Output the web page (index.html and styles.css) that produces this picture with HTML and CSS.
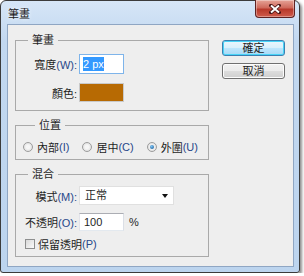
FILE: index.html
```html
<!DOCTYPE html>
<html lang="zh-Hant">
<head>
    <meta charset="UTF-8">
    <title>筆畫</title>
    <link rel="stylesheet" href="styles.css">
</head>
<body>

    <div class="window">
        <div class="titlebar">
            <span class="title">筆畫</span>
            <button class="close-btn">
                <svg width="12" height="10" viewBox="0 0 12 10">
                    <path d="M2 1.5 L10 8.5 M10 1.5 L2 8.5" stroke="#4a1515" stroke-width="3.6" stroke-linecap="square"/>
                    <path d="M2 1.5 L10 8.5 M10 1.5 L2 8.5" stroke="#fff" stroke-width="2"/>
                </svg>
            </button>
        </div>

        <div class="client">
            <div class="groups">
                <fieldset class="group group-stroke">
                    <legend>筆畫</legend>
                    <div class="field-row">
                        <label>寬度<span class="key">(W):</span></label>
                        <div class="text-box focused"><span class="selected">2 px</span></div>
                    </div>
                    <div class="field-row">
                        <label>顏色:</label>
                        <div class="color-box"></div>
                    </div>
                </fieldset>

                <fieldset class="group group-location">
                    <legend>位置</legend>
                    <div class="radio-row">
                        <label class="option"><span class="radio"></span>內部<span class="key">(I)</span></label>
                        <label class="option"><span class="radio"></span>居中<span class="key">(C)</span></label>
                        <label class="option"><span class="radio checked"></span>外圍<span class="key">(U)</span></label>
                    </div>
                </fieldset>

                <fieldset class="group group-blend">
                    <legend>混合</legend>
                    <div class="field-row">
                        <label>模式<span class="key">(M):</span></label>
                        <div class="select-box">正常<span class="arrow"></span></div>
                    </div>
                    <div class="field-row opacity-row">
                        <label>不透明<span class="key">(O):</span></label>
                        <div class="text-box">100</div>
                        <span class="unit">%</span>
                    </div>
                    <label class="check-row"><span class="checkbox"></span>保留透明<span class="key">(P)</span></label>
                </fieldset>
            </div>

            <div class="buttons">
                <button class="dlg-btn default-btn">確定</button>
                <button class="dlg-btn">取消</button>
            </div>
        </div>
    </div>

</body>
</html>
```

FILE: styles.css
```css
body {
    margin: 0;
    background: #ffffff;
    font-family: "Liberation Sans", "Noto Sans CJK TC", sans-serif;
    font-size: 11px;
    color: #1e1e1e;
}
.window {
    width: 298px;
    height: 271px;
    border: 1px solid #3b3b3b;
    border-radius: 6px 6px 3px 3px;
    background: linear-gradient(to bottom, #d6e6f7, #c2d8f0 40px, #bcd4ee);
    box-shadow: 2px 2px 3px rgba(0, 0, 0, 0.45);
    display: flex;
    flex-direction: column;
}
.titlebar {
    height: 23px;
    display: flex;
    justify-content: space-between;
    align-items: flex-start;
    padding-left: 7px;
}
.title {
    margin-top: 5px;
    font-size: 11px;
    line-height: 16px;
    color: #1a1a1a;
    text-shadow: 0 0 4px #ffffff;
}
.close-btn {
    margin-top: -1px;
    margin-right: 4px;
    width: 40px;
    height: 18px;
    padding: 0;
    border: 1px solid #5e2222;
    border-top: none;
    border-radius: 0 0 4px 4px;
    background: linear-gradient(to bottom, #e6a397, #cf6a5c 45%, #b8392b 55%, #cf5c4c);
    box-shadow: inset 0 0 0 1px rgba(255, 255, 255, 0.35);
    display: flex;
    align-items: center;
    justify-content: center;
}
.client {
    flex: 1;
    margin: 0 5px 5px 6px;
    border: 1px solid #8fa6c3;
    background: #eeeeee;
    display: flex;
    padding: 7px 0 0 7px;
}
.groups {
    width: 194px;
    display: flex;
    flex-direction: column;
    gap: 6px;
}
.group {
    margin: 0;
    border: 1px solid #a9a9a9;
    min-width: 0;
}
.group legend {
    margin-left: 12px;
    padding: 0 4px;
    line-height: 16px;
}
.group-stroke {
    padding: 6px 0 8px 0;
    display: flex;
    flex-direction: column;
    gap: 9px;
}
.group-location {
    padding: 7px 0 5px 7px;
}
.group-blend {
    padding: 4px 0 5px 0;
    display: flex;
    flex-direction: column;
    gap: 8px;
}
.field-row {
    display: flex;
    align-items: center;
}
.field-row label {
    width: 61px;
    margin-right: 2px;
    text-align: right;
    white-space: nowrap;
}
.key {
    color: #27478a;
}
.text-box {
    width: 45px;
    height: 18px;
    box-sizing: border-box;
    background: #ffffff;
    border: 1px solid;
    border-color: #abadb3 #dbdfe6 #e3e9ef #e2e3ea;
    padding-left: 4px;
    line-height: 16px;
}
.text-box.focused {
    height: 20px;
    border-color: #7eb4ea;
    padding-left: 3px;
    line-height: 18px;
}
.selected {
    background: #3399ff;
    color: #ffffff;
    padding: 1px 0;
}
.color-box {
    width: 45px;
    height: 19px;
    box-sizing: border-box;
    border: 1px solid #c9c9c9;
    background: #b76a03;
}
.radio-row {
    display: flex;
    gap: 13px;
    height: 14px;
    align-items: center;
}
.option, .check-row {
    display: flex;
    align-items: center;
    white-space: nowrap;
}
.radio {
    width: 10px;
    height: 10px;
    box-sizing: border-box;
    border-radius: 50%;
    border: 1px solid #9c9c9c;
    background: radial-gradient(circle, #f6f6f6 30%, #d6d6d6);
    margin-right: 4px;
    display: flex;
    align-items: center;
    justify-content: center;
}
.radio.checked::after {
    content: "";
    width: 4px;
    height: 4px;
    border-radius: 50%;
    background: radial-gradient(circle at 40% 35%, #7cc4f4, #0d4f8e);
}
.select-box {
    width: 95px;
    height: 19px;
    box-sizing: border-box;
    background: #ffffff;
    border: 1px solid #e0e0e0;
    padding-left: 5px;
    line-height: 17px;
    display: flex;
    justify-content: space-between;
    align-items: center;
}
.arrow {
    width: 0;
    height: 0;
    border-left: 3px solid transparent;
    border-right: 3px solid transparent;
    border-top: 4px solid #111111;
    margin-right: 5px;
}
.opacity-row .unit {
    margin-left: 5px;
}
.check-row {
    height: 14px;
    padding-left: 9px;
    margin-top: -2px;
}
.checkbox {
    width: 10px;
    height: 10px;
    box-sizing: border-box;
    border: 1px solid #8e8f8f;
    background: linear-gradient(135deg, #d8d8d8, #fbfbfb);
    margin-right: 3px;
}
.buttons {
    margin-left: 13px;
    margin-top: 8px;
    display: flex;
    flex-direction: column;
    gap: 7px;
}
.dlg-btn {
    width: 63px;
    height: 16px;
    padding: 0;
    font-family: "Liberation Sans", "Noto Sans CJK TC", sans-serif;
    font-size: 11px;
    line-height: 14px;
    color: #1e1e1e;
    border: 1px solid #707070;
    border-radius: 3px;
    background: linear-gradient(to bottom, #f2f2f2, #ebebeb 50%, #dddddd 50%, #cfcfcf);
    box-shadow: inset 0 0 0 1px #fcfcfc;
}
.default-btn {
    border-color: #3c7fb1;
    background: linear-gradient(to bottom, #eaf6fd, #d9f0fc 50%, #bee6fd 50%, #a7d9f5);
    box-shadow: inset 0 0 0 1px #48d4f7;
}
```
